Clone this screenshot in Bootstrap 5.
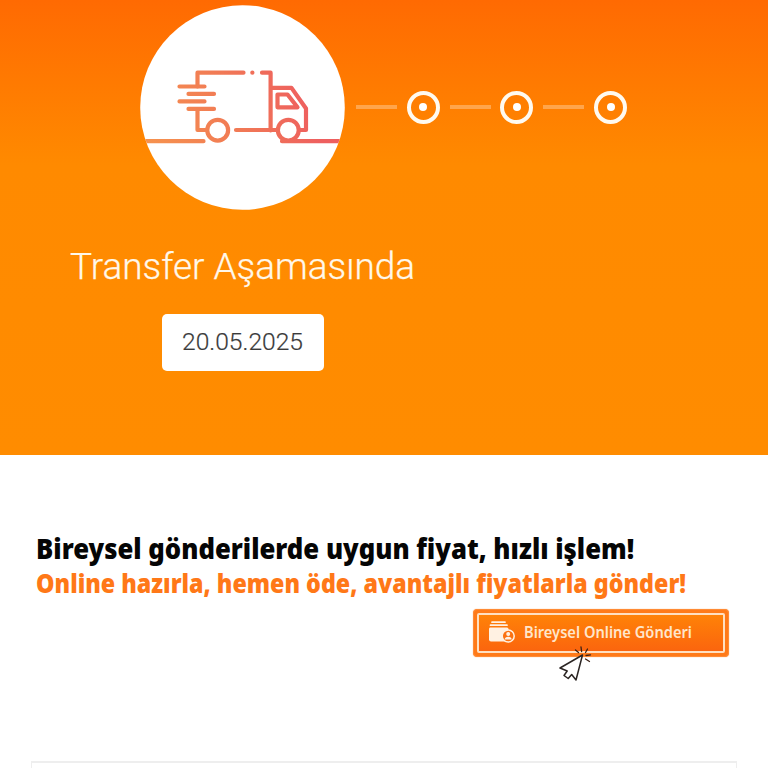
<!DOCTYPE html>
<html lang="tr">
<head>
<meta charset="utf-8">
<meta name="viewport" content="width=device-width, initial-scale=1">
<title>Gönderi Takip</title>
<link href="https://cdn.jsdelivr.net/npm/bootstrap@5.3.0/dist/css/bootstrap.min.css" rel="stylesheet">
<style>
body{font-family:Roboto,"Liberation Sans",sans-serif;height:768px;overflow:hidden;background:#fff}
.hero{height:455px;background:linear-gradient(#ff6a02 0,#ff8a00 165px,#ff8c00 100%)}
.steps{height:214px;padding-left:140px}
.truck{width:205px;height:205px;flex:none}
.dash{width:41px;height:4px;background:#ffa54c;flex:none}
.dash-first{margin-left:11px}
.dash-next{margin-left:10px}
.ring{width:33px;height:33px;margin-left:9.7px;border:4px solid #fffaf0;flex:none}
.ring span{width:8px;height:8px;background:#fff}
.stage{width:485px}
.stage-name{font-size:36.9px;font-weight:300;line-height:46px;margin-top:30px;color:#fff8ea;white-space:nowrap;-webkit-text-stroke:.25px #fff8ea}
.date{width:162px;height:57px;margin-top:24px;font-size:24.6px;font-weight:300;color:#3a3a3a;border-radius:5px;-webkit-text-stroke:.2px #3a3a3a}
.promo{padding:76px 0 0 36px;height:306px;font-family:"Noto Sans","Open Sans",sans-serif}
.line{font-weight:900;white-space:nowrap;line-height:35px;height:35px;margin:0}
.line span{display:inline-block;transform-origin:left center}
.first{font-size:28px;color:#050505}
.second{font-size:26.5px;color:#ff7817}
.first span{transform:scaleX(.917)}
.second span{transform:scaleX(.878)}
.send{width:256px;height:48px;margin:8px 0 0 437px;padding:3px;background:#ff7a18;border-radius:4px;border:1px solid #ff8b35;box-shadow:0 0 1px #ff8b35}
.send-in{border:2px solid #ffdfc0;border-radius:2px;background:linear-gradient(#ff8207,#fb650e);color:#ffe6cb;font-size:16px;font-weight:600;padding:0 0 2px 9px}
.send-in svg{margin-right:9px;flex:none}
.send-text{white-space:nowrap;transform-origin:left center;transform:scaleX(.915)}
.pointer{left:84px;top:35px}
.panel{margin:0 31px;height:7px;border:1px solid #eee;border-top:2px solid #eee;border-bottom:0}
</style>
</head>
<body>
<section class="hero">
  <div class="steps d-flex align-items-center">
    <svg class="truck" viewBox="140 4.5 205 205">
      <defs>
        <linearGradient id="warm" gradientUnits="userSpaceOnUse" x1="145" y1="130" x2="330" y2="70"><stop stop-color="#f6924e"/><stop offset=".45" stop-color="#f17a55"/><stop offset=".85" stop-color="#ee5f5f"/></linearGradient>
        <clipPath id="disc"><circle cx="242.5" cy="107" r="102.3"/></clipPath>
      </defs>
      <circle cx="242.5" cy="107" r="102.3" fill="#fff"/>
      <g clip-path="url(#disc)" fill="none" stroke="url(#warm)" stroke-width="4.200" stroke-linecap="round" stroke-linejoin="round">
        <path d="M197.500 86V72.200H243.500M262 72.200H270.600V130"/>
        <path d="M252.300 72.200h.1"/>
        <path d="M179.500 86H204.500M188.500 93.400H214M179.500 100.900H204.500M188.500 108.400H214"/>
        <path d="M197.500 109V129.500H207M236 129.500H277M272 87.400H291.500L306 108V129.500H299"/>
        <path d="M277.500 94H287.500L297.500 106.800H277.500Z"/>
        <circle cx="217.700" cy="129.700" r="10.400"/><circle cx="288.300" cy="129.700" r="10.400"/>
        <path d="M130 140.700H203.500M282 140.700H350"/>
      </g>
    </svg>
    <div class="dash dash-first"></div>
    <div class="ring rounded-circle d-flex align-items-center justify-content-center"><span class="rounded-circle"></span></div>
    <div class="dash dash-next"></div>
    <div class="ring rounded-circle d-flex align-items-center justify-content-center"><span class="rounded-circle"></span></div>
    <div class="dash dash-next"></div>
    <div class="ring rounded-circle d-flex align-items-center justify-content-center"><span class="rounded-circle"></span></div>
  </div>
  <div class="stage d-flex flex-column align-items-center">
    <div class="stage-name">Transfer Aşamasında</div>
    <div class="date bg-white d-flex align-items-center justify-content-center">20.05.2025</div>
  </div>
</section>
<section class="promo">
  <p class="line first"><span>Bireysel gönderilerde uygun fiyat, hızlı işlem!</span></p>
  <p class="line second"><span>Online hazırla, hemen öde, avantajlı fiyatlarla gönder!</span></p>
  <a class="send d-block position-relative text-decoration-none" href="#">
    <span class="send-in d-flex align-items-center h-100">
      <svg width="27" height="22" viewBox="0 0 27 22"><path d="M4 1.200H17M2.500 4.200H19" stroke="#fff1e2" stroke-width="1.700" stroke-linecap="round"/><path d="M2 6.500H19Q20.500 6.500 20.500 8V20.500H3Q1 20.500 1 18.500V8Q1 6.500 2 6.500Z" fill="#fff1e2"/><circle cx="20.200" cy="15" r="6" fill="#fc7110" stroke="#fff1e2" stroke-width="1.500"/><circle cx="20.200" cy="13" r="2" fill="#fff1e2"/><path d="M16.700 18.500Q17 15.700 20.200 15.700T23.700 18.500Z" fill="#fff1e2"/></svg>
      <span class="send-text">Bireysel Online Gönderi</span>
    </span>
    <svg class="pointer position-absolute" width="36" height="38" viewBox="558 645 36 38"><path d="M582.500 655L560 668L567.200 671L564 675.500L568.200 678.500L571.700 674.500L576 680Z" fill="#fff" stroke="#2b2523" stroke-width="1.500" stroke-linejoin="round"/><path d="M575.500 650l3 2.500M581 647l.6 4.500M587.500 649l-2 3.500M586 655.500l4.500-.6M585.500 659l4 2.500" stroke="#3b2015" stroke-width="1.300" stroke-linecap="round"/></svg>
  </a>
</section>
<div class="panel"></div>
<script src="https://cdn.jsdelivr.net/npm/bootstrap@5.3.0/dist/js/bootstrap.bundle.min.js"></script>
</body>
</html>
